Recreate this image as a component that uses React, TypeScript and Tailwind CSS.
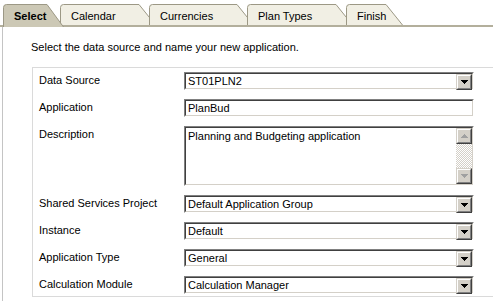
import clsx from "clsx";

const tabs = [
  { label: "Select", w: 61, cls: "w-[61px]", active: true },
  { label: "Calendar", w: 96, cls: "w-[96px] -ml-[4px]" },
  { label: "Currencies", w: 105, cls: "w-[105px] -ml-[7px]" },
  { label: "Plan Types", w: 106, cls: "w-[106px] -ml-[7px]" },
  { label: "Finish", w: 57, cls: "w-[57px] -ml-[7px]" },
];

function Tab({ label, w, cls, active }: { label: string; w: number; cls: string; active?: boolean }) {
  const h = active ? 23 : 21;
  const outline = `M0.5 ${h} V3.5 Q0.5 0.5 3.5 0.5 H${w - 17} L${w - 0.5} ${h}`;
  return (
    <div
      className={clsx(
        "relative flex items-start pl-[11px] pt-[5px] leading-[14px]",
        cls,
        active ? "z-10 h-[23px] -mb-[2px] font-bold" : "h-[21px]"
      )}
    >
      <svg className="absolute left-0 top-0" width={w} height={h}>
        <path d={outline + " Z"} fill={active ? "#ccc8b5" : "#f1efe4"} />
        <path d={outline} fill="none" stroke="#9c9885" />
      </svg>
      <span className="relative">{label}</span>
    </div>
  );
}

function Sunken({ className, children }: { className?: string; children: React.ReactNode }) {
  return (
    <div className={clsx("border border-t-[#808080] border-l-[#808080] border-b-white border-r-white", className)}>
      <div className="flex h-full border border-t-[#404040] border-l-[#404040] border-b-[#d4d0c8] border-r-[#d4d0c8] bg-white">
        {children}
      </div>
    </div>
  );
}

function Arrow({ up, color = "#000000" }: { up?: boolean; color?: string }) {
  const rows = up ? [3, 2, 1, 0] : [0, 1, 2, 3];
  return (
    <svg width="7" height="4" shapeRendering="crispEdges">
      {rows.map((inset, i) => (
        <rect key={i} x={inset} y={i} width={7 - inset * 2} height={1} fill={color} />
      ))}
    </svg>
  );
}

function Button3d({ children }: { children: React.ReactNode }) {
  return (
    <div className="h-[16px] w-[16px] border border-t-[#d4d0c8] border-l-[#d4d0c8] border-b-[#404040] border-r-[#404040]">
      <div className="flex h-full items-center justify-center border border-t-white border-l-white border-b-[#808080] border-r-[#808080] bg-[#d4d0c8]">
        {children}
      </div>
    </div>
  );
}

function Select({ value }: { value: string }) {
  return (
    <Sunken className="h-[18px]">
      <div className="flex-1 pl-[2px] leading-[14px]">{value}</div>
      <Button3d>
        <Arrow />
      </Button3d>
    </Sunken>
  );
}

function Row({ label, children }: { label: string; children: React.ReactNode }) {
  return (
    <div className="grid grid-cols-[145px_290px]">
      <div className="pt-[1px] leading-[14px]">{label}</div>
      {children}
    </div>
  );
}

export default function App() {
  return (
    <div className="flex h-[301px] w-[493px] flex-col overflow-hidden bg-white text-[11px] text-black font-['Liberation_Sans',Arial,sans-serif]">
      <div className="flex items-start border-b-2 border-[#b3af9c] pl-[3px] pt-[4px]">
        {tabs.map((t) => (
          <Tab key={t.label} {...t} />
        ))}
      </div>

      <div className="ml-[2px] flex-1 border-l border-[#c4c4c4] pt-[13px]">
        <p className="pl-[28px] leading-[14px]">Select the data source and name your new application.</p>

        <div className="ml-[29px] mt-[13px] flex flex-col gap-[9px] border-y border-l border-[#dadada] pb-[2px] pl-[6px] pt-[4px]">
          <Row label="Data Source">
            <Select value="ST01PLN2" />
          </Row>
          <Row label="Application">
            <Sunken className="h-[18px]">
              <div className="pl-[2px] leading-[14px]">PlanBud</div>
            </Sunken>
          </Row>
          <Row label="Description">
            <Sunken className="h-[60px]">
              <div className="flex-1 pl-[2px] pt-[1px] leading-[14px]">Planning and Budgeting application</div>
              <div className="flex w-[16px] flex-col">
                <Button3d>
                  <Arrow up color="#a0a0a0" />
                </Button3d>
                <div className="flex-1 bg-[repeating-conic-gradient(#d4d0c8_0_25%,#ffffff_0_50%)] bg-[length:2px_2px]" />
                <Button3d>
                  <Arrow color="#a0a0a0" />
                </Button3d>
              </div>
            </Sunken>
          </Row>
          <Row label="Shared Services Project">
            <Select value="Default Application Group" />
          </Row>
          <Row label="Instance">
            <Select value="Default" />
          </Row>
          <Row label="Application Type">
            <Select value="General" />
          </Row>
          <Row label="Calculation Module">
            <Select value="Calculation Manager" />
          </Row>
        </div>
      </div>
    </div>
  );
}
